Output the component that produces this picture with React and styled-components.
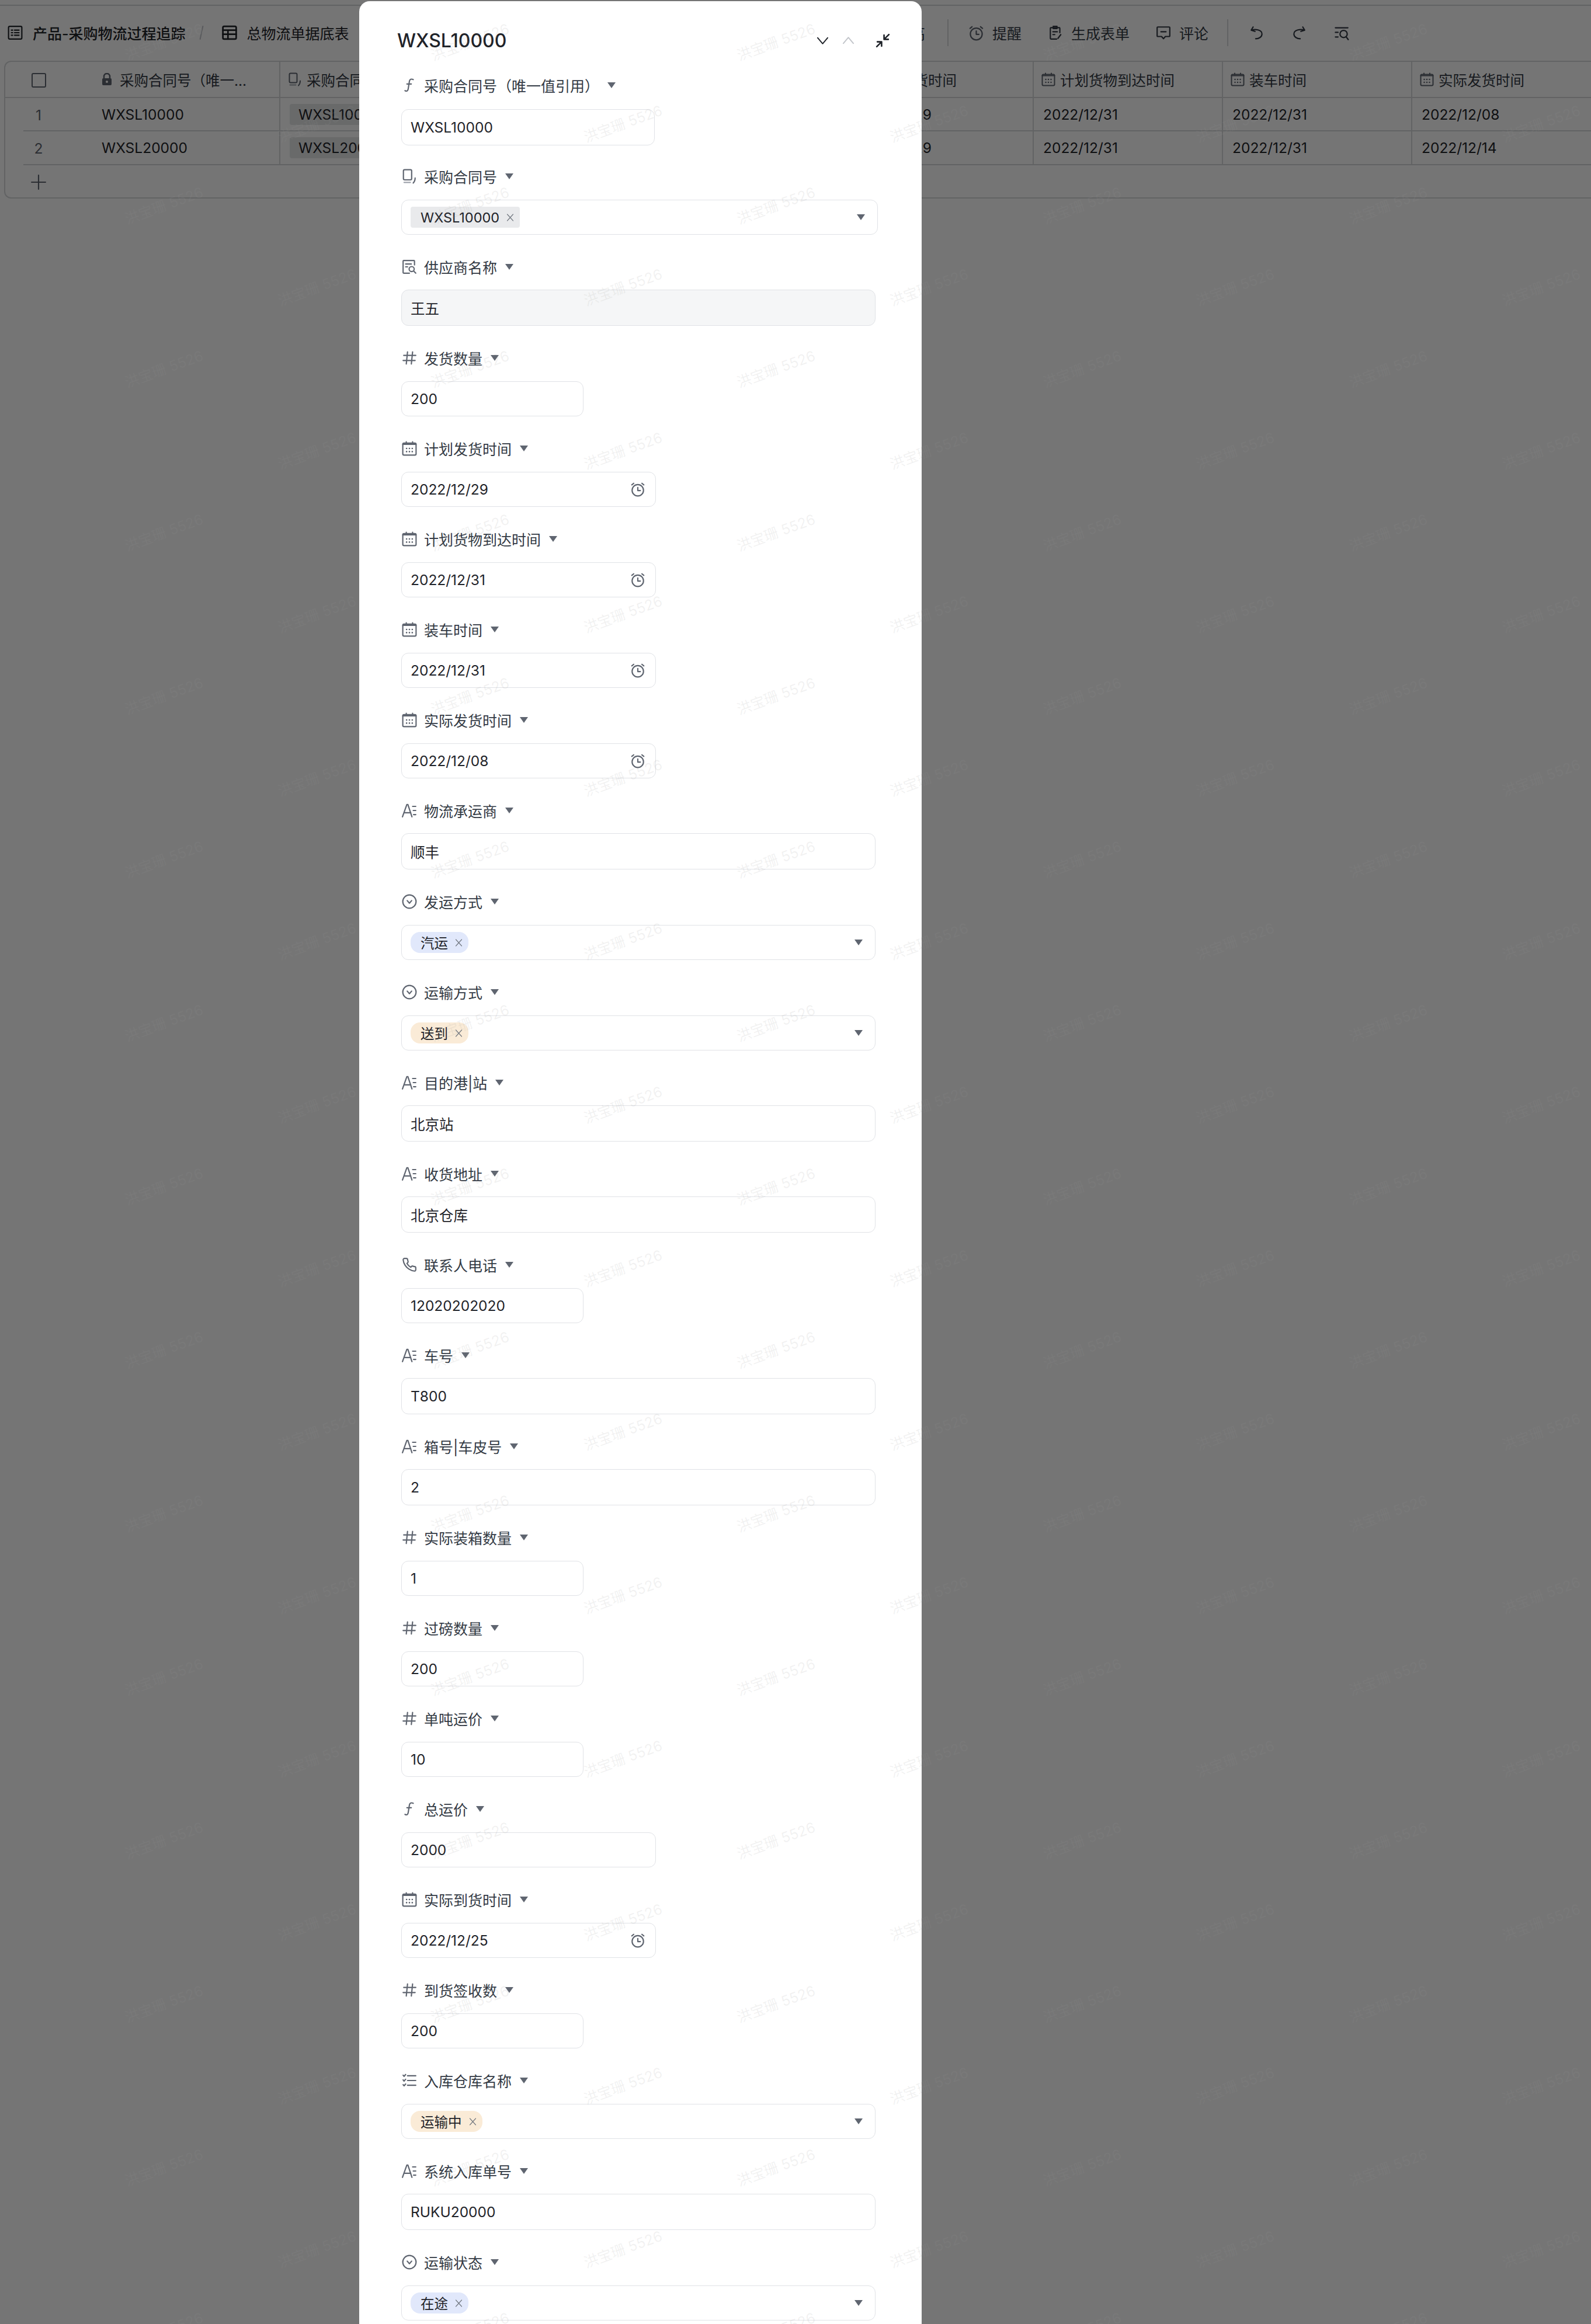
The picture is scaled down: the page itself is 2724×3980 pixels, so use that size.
import React from "react";
import styled, { createGlobalStyle } from "styled-components";

const GlobalStyle = createGlobalStyle`
  html, body { margin: 0; padding: 0; background: #fff; }
  body { font-family: Inter, "Noto Sans CJK SC", sans-serif; color: #1f2329; }
  * { box-sizing: border-box; }
`;

const Page = styled.div`
  position: relative;
  width: 2724px;
  height: 3980px;
  overflow: hidden;
  background: #fff;
`;
const TopStrip = styled.div`
  height: 10px;
  border-bottom: 2px solid #d5d7da;
`;
const Toolbar = styled.div`
  display: flex;
  align-items: center;
  height: 94px;
  padding: 0 414px 2px 13px;
  font-size: 25px;
  color: #1f2329;
`;
const Crumb = styled.div`
  display: flex;
  align-items: center;
  gap: 17px;
  font-weight: ${(p) => (p.$bold ? 500 : 400)};
  white-space: nowrap;
`;
const Slash = styled.span`
  width: 2px;
  height: 24px;
  margin: 0 34px 0 26px;
  background: #c2c5ca;
  transform: rotate(12deg);
`;
const Spacer = styled.div`
  flex: 1;
`;
const ToolGroup = styled.div`
  display: flex;
  align-items: center;
  gap: ${(p) => p.$gap}px;
`;
const ToolItem = styled.div`
  display: flex;
  align-items: center;
  gap: 14px;
  white-space: nowrap;
  color: #333a44;
`;
const ToolDivider = styled.div`
  width: 2px;
  height: 46px;
  margin: 0 ${(p) => p.$right}px 0 ${(p) => p.$left}px;
  background: #d5d7da;
`;

const TableWrap = styled.div`
  margin-left: 7px;
  border: 2px solid #d5d7da;
  border-right: none;
  border-radius: 12px 0 0 12px;
  overflow: hidden;
  height: 236px;
  font-size: 24.5px;
`;
const TableRow = styled.div`
  display: grid;
  grid-template-columns: 114px 357px 322px 322px 322px repeat(4, 324px);
  height: ${(p) => p.$h}px;
`;
const IndexCell = styled.div`
  position: relative;
  display: flex;
  align-items: center;
  justify-content: center;
  color: #5f6570;
  &::after {
    content: "";
    position: absolute;
    left: ${(p) => (p.$head ? 0 : 31)}px;
    right: 0;
    bottom: 0;
    height: 2px;
    background: #d5d7da;
  }
`;
const Cell = styled.div`
  display: flex;
  align-items: center;
  gap: ${(p) => (p.$head ? 8 : 0)}px;
  padding-left: ${(p) => (p.$first ? 51 : p.$head ? 13 : 16)}px;
  border-bottom: 2px solid #d5d7da;
  border-right: 2px solid #d5d7da;
  color: ${(p) => (p.$head ? "#333a44" : "#1f2329")};
  white-space: nowrap;
  overflow: hidden;
`;
const TableChip = styled.span`
  display: inline-flex;
  align-items: center;
  height: 36px;
  padding: 0 15px;
  background: #e5e6e8;
  border-radius: 4px;
`;
const CheckBox = styled.span`
  width: 25px;
  height: 25px;
  border: 2.5px solid #5f6570;
  border-radius: 3px;
`;
const AddRow = styled.div`
  width: 114px;
  height: 57px;
  display: flex;
  align-items: center;
  justify-content: center;
`;

const Overlay = styled.div`
  position: absolute;
  inset: 0;
  background: rgba(0, 0, 0, 0.54);
`;
const Modal = styled.div`
  position: absolute;
  top: 2px;
  left: 615px;
  width: 963px;
  height: 4100px;
  padding-top: 47px;
  background: #fff;
  border-radius: 18px;
`;
const ModalHead = styled.div`
  display: flex;
  align-items: center;
  height: 40px;
  padding: 0 54px 0 65px;
  margin-bottom: 42px;
`;
const Title = styled.div`
  font-size: 32px;
  font-weight: 500;
  color: #1f2329;
`;
const HeadIcons = styled.div`
  display: flex;
  align-items: center;
  margin-left: auto;
`;
const UpChevron = styled.span`
  display: flex;
  margin: 0 35px 0 21px;
`;
const FieldList = styled.div`
  display: flex;
  flex-direction: column;
  padding-left: 72px;
`;
const Field = styled.div`
  padding-bottom: ${(p) => (p.$first ? 38 : 40)}px;
`;
const LabelRow = styled.div`
  display: flex;
  align-items: center;
  gap: 12px;
  height: 30px;
  padding-left: 1px;
  font-size: 25px;
  color: #333a44;
  white-space: nowrap;
`;
const LabelText = styled.span`
  margin-right: 2px;
`;
const Caret = styled.span`
  width: 0;
  height: 0;
  border-left: 7.5px solid transparent;
  border-right: 7.5px solid transparent;
  border-top: 10px solid #5f6570;
`;
const Control = styled.div`
  display: flex;
  align-items: center;
  width: ${(p) => p.$w}px;
  height: ${(p) => p.$h}px;
  margin-top: ${(p) => (p.$first ? 26 : p.$h === 62 ? 24 : 25)}px;
  padding: 0 15px;
  border: 1.5px solid #e0e2e6;
  border-radius: 12px;
  background: ${(p) => (p.$filled ? "#f5f6f7" : "#fff")};
  font-size: 24.5px;
  color: #1f2329;
`;
const ControlEnd = styled.span`
  display: flex;
  margin-left: auto;
  margin-right: ${(p) => p.$mr}px;
`;
const Tag = styled.span`
  display: inline-flex;
  align-items: center;
  gap: 12px;
  height: 36px;
  padding: 0 10px 0 17px;
  border-radius: ${(p) => (p.$tone === "gray" ? 4 : 16)}px;
  font-size: 23.5px;
  background: ${(p) => ({ gray: "#e9eaec", blue: "#e1e8fb", orange: "#faebd7" })[p.$tone]};
`;

const WatermarkLayer = styled.div`
  position: absolute;
  inset: 0;
  overflow: hidden;
  pointer-events: none;
`;
const WatermarkRow = styled.div`
  display: flex;
  height: 140px;
  padding-left: ${(p) => (p.$odd ? 280 : 18)}px;
  width: 3400px;
`;
const WatermarkText = styled.span`
  flex: 0 0 524px;
  display: flex;
  align-items: center;
  justify-content: center;
  font-size: 24.5px;
  white-space: nowrap;
  color: rgba(150, 150, 150, 0.13);
  span {
    transform: rotate(-20deg);
  }
`;

const Svg = styled.svg`
  flex: none;
  fill: none;
  stroke: ${(p) => p.$color || "#5f6570"};
  stroke-width: ${(p) => p.$sw || 2};
  stroke-linecap: round;
  stroke-linejoin: round;
`;
const Ico = ({ size = 26, color, sw, children }) => (
  <Svg width={size} height={size} viewBox="0 0 24 24" $color={color} $sw={sw}>
    {children}
  </Svg>
);

const FormulaIcon = () => (
  <Ico>
    <path d="M18 3c-3-1.500-5.500-.5-6 2.500L10 18c-.5 3-2.500 4-5 2.500" />
    <path d="M8 10h7" />
  </Ico>
);
const LinkIcon = ({ size }) => (
  <Ico size={size}>
    <rect x="2.500" y="1.500" width="13" height="16" rx="2" />
    <path d="M21 14.500c0 3.500-1 6-3 8" />
    <path d="M3.500 21.500h10" stroke="#9ea3ab" />
  </Ico>
);
const LookupIcon = ({ size }) => (
  <Ico size={size}>
    <path d="M20 9V3a1 1 0 0 0-1-1H3a1 1 0 0 0-1 1v18a1 1 0 0 0 1 1h9" />
    <path d="M6 7.500h9M6 12h3" />
    <circle cx="15.500" cy="15.500" r="4" />
    <path d="M18.500 18.500l3.500 3.500" />
  </Ico>
);
const HashIcon = ({ size }) => (
  <Ico size={size}>
    <path d="M9 2.500L7 21.500M17 2.500l-2 19M3 8h19M2 16h19" />
  </Ico>
);
const CalendarIcon = ({ size }) => (
  <Ico size={size}>
    <rect x="1.500" y="3.500" width="21" height="19" rx="2" />
    <path d="M7 1.500v2M17 1.500v2M1.500 5.500h21" />
    <path d="M7.500 12h.01M12 12h.01M16.500 12h.01M7.500 17h.01M12 17h.01M16.500 17h.01" strokeWidth="2.500" />
  </Ico>
);
const TextIcon = () => (
  <Ico>
    <path d="M1 22L8 2.500h1.500L16 22" />
    <path d="M4 15.500h10" />
    <path d="M17 5.500h5M18 12h4M18.500 18.500h3.500" />
  </Ico>
);
const SelectIcon = () => (
  <Ico>
    <circle cx="12" cy="12" r="10.500" />
    <path d="M8.500 10.500l3.500 4 3.500-4" />
  </Ico>
);
const PhoneIcon = () => (
  <Ico>
    <path d="M22 16.920v3a2 2 0 0 1-2.180 2 19.790 19.790 0 0 1-8.630-3.070 19.500 19.500 0 0 1-6-6 19.790 19.790 0 0 1-3.070-8.670A2 2 0 0 1 4.110 2h3a2 2 0 0 1 2 1.720c.127.960.361 1.903.700 2.810a2 2 0 0 1-.450 2.110L8.090 9.910a16 16 0 0 0 6 6l1.270-1.270a2 2 0 0 1 2.110-.450c.907.339 1.850.573 2.810.700A2 2 0 0 1 22 16.920z" />
  </Ico>
);
const ChecklistIcon = () => (
  <Ico>
    <path d="M9 4.500h13M9 12h13M9 19.500h13" />
    <path d="M2 3.500l1.500 2L6 2.500M2 11l1.500 2L6 10M2 18.500l1.500 2L6 17.500" />
  </Ico>
);
const AlarmIcon = ({ size = 26 }) => (
  <Ico size={size}>
    <circle cx="12" cy="13.500" r="9" />
    <path d="M12 9v5h4" />
    <path d="M2.500 5l3-2.500M21.500 5l-3-2.500" />
  </Ico>
);
const LockIcon = () => (
  <svg width="18" height="22" viewBox="0 0 18 22" style={{ flex: "none", marginRight: 5 }}>
    <path d="M4 9V6a5 5 0 0 1 10 0v3" fill="none" stroke="#5f6570" strokeWidth="2.500" />
    <rect x="1" y="9" width="16" height="12" rx="2" fill="#5f6570" />
    <circle cx="9" cy="15" r="2" fill="#fff" />
  </svg>
);
const TableIcon = () => (
  <Ico color="#1f2329" sw={2.500}>
    <rect x="1.500" y="2" width="21" height="20" rx="2" />
    <path d="M1.500 8h21M1.500 14.500h21M9.500 8v14" />
  </Ico>
);
const SheetIcon = () => (
  <Ico color="#1f2329">
    <rect x="1.500" y="2" width="21" height="20" rx="2" />
    <path d="M6 8h2M11 8h7M6 12h2M11 12h7M6 16h2M11 16h7" />
  </Ico>
);
const FormIcon = () => (
  <Ico color="#333a44">
    <path d="M19 12V5a1 1 0 0 0-1-1H5a1 1 0 0 0-1 1v16a1 1 0 0 0 1 1h9" />
    <path d="M8.500 2h6v3.500h-6z" />
    <path d="M8 10.500h7M8 15h3" />
    <path d="M20.500 15l-4.500 6" />
  </Ico>
);
const CommentIcon = () => (
  <Ico color="#333a44">
    <path d="M3 3h18a1 1 0 0 1 1 1v13a1 1 0 0 1-1 1h-6l-3 3.500L9 18H3a1 1 0 0 1-1-1V4a1 1 0 0 1 1-1z" />
    <path d="M8 10.500h8" />
  </Ico>
);
const UndoIcon = () => (
  <Ico color="#333a44">
    <path d="M6 3L3 8l6 2" />
    <path d="M3.500 8C9 6 20 7 20 14c0 5-5 7.500-10 7.500" />
  </Ico>
);
const RedoIcon = () => (
  <Ico color="#333a44">
    <path d="M18 3l3 5-6 2" />
    <path d="M20.500 8C15 6 4 7 4 14c0 5 5 7.500 10 7.500" />
  </Ico>
);
const SearchListIcon = () => (
  <Ico size={27} color="#333a44">
    <path d="M3 4h19M3 11h4M3 18h4" />
    <circle cx="15.500" cy="13.500" r="5.500" />
    <path d="M19.500 18l3 4" />
  </Ico>
);
const PlusIcon = () => (
  <Ico size={26}>
    <path d="M12 1v22M1 12h22" />
  </Ico>
);
const CloseMark = () => (
  <Ico size={13} color="#6c727b" sw={2.500}>
    <path d="M3 2l18 20M21 2L3 22" />
  </Ico>
);

const iconByType = {
  formula: FormulaIcon,
  link: LinkIcon,
  lookup: LookupIcon,
  number: HashIcon,
  date: CalendarIcon,
  text: TextIcon,
  select: SelectIcon,
  phone: PhoneIcon,
  check: ChecklistIcon,
};

const fields = [
  { icon: "formula", label: "采购合同号（唯一值引用）", value: "WXSL10000", w: 434, h: 62, first: true },
  { icon: "link", label: "采购合同号", tag: "WXSL10000", tone: "gray", w: 816 },
  { icon: "lookup", label: "供应商名称", value: "王五", w: 812, h: 62, filled: true },
  { icon: "number", label: "发货数量", value: "200", w: 312 },
  { icon: "date", label: "计划发货时间", value: "2022/12/29", date: true },
  { icon: "date", label: "计划货物到达时间", value: "2022/12/31", date: true },
  { icon: "date", label: "装车时间", value: "2022/12/31", date: true },
  { icon: "date", label: "实际发货时间", value: "2022/12/08", date: true },
  { icon: "text", label: "物流承运商", value: "顺丰", w: 812, h: 62 },
  { icon: "select", label: "发运方式", tag: "汽运", tone: "blue", w: 812 },
  { icon: "select", label: "运输方式", tag: "送到", tone: "orange", w: 812 },
  { icon: "text", label: "目的港|站", value: "北京站", w: 812, h: 62 },
  { icon: "text", label: "收货地址", value: "北京仓库", w: 812, h: 62 },
  { icon: "phone", label: "联系人电话", value: "12020202020", w: 312 },
  { icon: "text", label: "车号", value: "T800", w: 812, h: 62 },
  { icon: "text", label: "箱号|车皮号", value: "2", w: 812, h: 62 },
  { icon: "number", label: "实际装箱数量", value: "1", w: 312 },
  { icon: "number", label: "过磅数量", value: "200", w: 312 },
  { icon: "number", label: "单吨运价", value: "10", w: 312 },
  { icon: "formula", label: "总运价", value: "2000", w: 436 },
  { icon: "date", label: "实际到货时间", value: "2022/12/25", date: true },
  { icon: "number", label: "到货签收数", value: "200", w: 312 },
  { icon: "check", label: "入库仓库名称", tag: "运输中", tone: "orange", w: 812 },
  { icon: "text", label: "系统入库单号", value: "RUKU20000", w: 812, h: 62 },
  { icon: "select", label: "运输状态", tag: "在途", tone: "blue", w: 812 },
];

const columns = [
  { icon: LinkIcon, title: "采购合同号", rows: ["WXSL10000", "WXSL20000"], chip: true },
  { icon: LookupIcon, title: "供应商名称", rows: ["王五", "王五"] },
  { icon: HashIcon, title: "发货数量", rows: ["200", "200"] },
  { icon: CalendarIcon, title: "计划发货时间", rows: ["2022/12/29", "2022/12/29"] },
  { icon: CalendarIcon, title: "计划货物到达时间", rows: ["2022/12/31", "2022/12/31"] },
  { icon: CalendarIcon, title: "装车时间", rows: ["2022/12/31", "2022/12/31"] },
  { icon: CalendarIcon, title: "实际发货时间", rows: ["2022/12/08", "2022/12/14"] },
];

const DataRow = ({ index, name }) => (
  <TableRow $h={index === 0 ? 57 : 58}>
    <IndexCell>{index + 1}</IndexCell>
    <Cell $first>{name}</Cell>
    {columns.map((col) => (
      <Cell key={col.title}>
        {col.chip ? <TableChip>{col.rows[index]}</TableChip> : col.rows[index]}
      </Cell>
    ))}
  </TableRow>
);

const FormField = ({ field }) => {
  const Icon = iconByType[field.icon];
  const h = field.h || 60;
  const w = field.date ? 436 : field.w;
  return (
    <Field $first={field.first}>
      <LabelRow>
        <Icon />
        <LabelText>{field.label}</LabelText>
        <Caret />
      </LabelRow>
      <Control $w={w} $h={h} $filled={field.filled} $first={field.first}>
        {field.tag ? (
          <>
            <Tag $tone={field.tone}>
              {field.tag}
              <CloseMark />
            </Tag>
            <ControlEnd $mr={6}>
              <Caret />
            </ControlEnd>
          </>
        ) : (
          field.value
        )}
        {field.date && (
          <ControlEnd $mr={2}>
            <AlarmIcon />
          </ControlEnd>
        )}
      </Control>
    </Field>
  );
};

export default function App() {
  return (
    <Page>
      <GlobalStyle />
      <TopStrip />
      <Toolbar>
        <Crumb $bold>
          <SheetIcon />
          产品-采购物流过程追踪
        </Crumb>
        <Slash />
        <Crumb>
          <TableIcon />
          总物流单据底表
        </Crumb>
        <Spacer />
        <ToolItem>行高</ToolItem>
        <ToolDivider $left={38} $right={34} />
        <ToolGroup $gap={45}>
          <ToolItem>
            <AlarmIcon size={27} />
            提醒
          </ToolItem>
          <ToolItem>
            <FormIcon />
            生成表单
          </ToolItem>
          <ToolItem>
            <CommentIcon />
            评论
          </ToolItem>
        </ToolGroup>
        <ToolDivider $left={32} $right={36} />
        <ToolGroup $gap={46}>
          <UndoIcon />
          <RedoIcon />
          <SearchListIcon />
        </ToolGroup>
      </Toolbar>
      <TableWrap>
        <TableRow $h={62}>
          <IndexCell $head>
            <CheckBox />
          </IndexCell>
          <Cell $head $first>
            <LockIcon />
            采购合同号（唯一...
          </Cell>
          {columns.map((col) => (
            <Cell $head key={col.title}>
              <col.icon size={24} />
              {col.title}
            </Cell>
          ))}
        </TableRow>
        <DataRow index={0} name="WXSL10000" />
        <DataRow index={1} name="WXSL20000" />
        <AddRow>
          <PlusIcon />
        </AddRow>
      </TableWrap>
      <Overlay />
      <Modal>
        <ModalHead>
          <Title>WXSL10000</Title>
          <HeadIcons>
            <Ico size={23} color="#1f2329">
              <path d="M3 7l9 10.500L21 7" />
            </Ico>
            <UpChevron>
              <Ico size={23} color="#c2c5ca">
                <path d="M3 17L12 6.500 21 17" />
              </Ico>
            </UpChevron>
            <Ico size={25} color="#1f2329" sw={2.500}>
              <path d="M22 2l-8 8M14 3v7h7M2 22l8-8M10 21v-7H3" />
            </Ico>
          </HeadIcons>
        </ModalHead>
        <FieldList>
          {fields.map((field, i) => (
            <FormField field={field} key={i} />
          ))}
        </FieldList>
      </Modal>
      <WatermarkLayer>
        {Array.from({ length: 29 }, (_, r) => (
          <WatermarkRow $odd={r % 2 === 1} key={r}>
            {Array.from({ length: 6 }, (_, c) => (
              <WatermarkText key={c}>
                <span>洪宝珊 5526</span>
              </WatermarkText>
            ))}
          </WatermarkRow>
        ))}
      </WatermarkLayer>
    </Page>
  );
}
